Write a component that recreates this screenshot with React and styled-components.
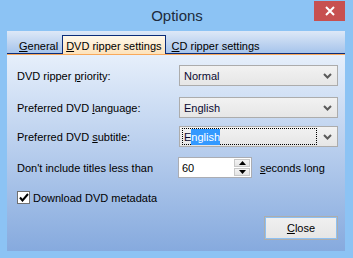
import React from 'react';
import styled, { createGlobalStyle } from 'styled-components';

const Global = createGlobalStyle`
  html, body { margin: 0; padding: 0; }
  body {
    width: 353px;
    height: 258px;
    overflow: hidden;
    font-family: "Liberation Sans", Arial, sans-serif;
    font-size: 11px;
    color: #000;
  }
`;

const Window = styled.div`
  position: relative;
  width: 353px;
  height: 258px;
  box-sizing: border-box;
  background: #8cc3f4;
  display: flex;
  flex-direction: column;
  padding: 0 8px 7px 7px;
`;

const TitleBar = styled.div`
  height: 31px;
  display: flex;
  align-items: center;
  justify-content: center;
  font-size: 15px;
  color: #1d2b3c;
  margin-left: 2px;
`;

const CloseX = styled.div`
  position: absolute;
  top: 1px;
  right: 8px;
  width: 31px;
  height: 20px;
  background: #c75050;
  display: flex;
  align-items: center;
  justify-content: center;
`;

const TabStrip = styled.div`
  height: 23px;
  box-sizing: border-box;
  display: flex;
  align-items: flex-end;
  padding-left: 8px;
  background: linear-gradient(#dde8f7, #a6c4eb);
  border-bottom: 1px solid #0c2c78;
  box-shadow: 0 1px 0 #f8a85a;
  position: relative;
  z-index: 1;
`;

const Tab = styled.div`
  height: 19px;
  box-sizing: border-box;
  display: flex;
  align-items: center;
  padding: 1px 3px 0;
  margin-right: ${p => (p.$active ? '2px' : '0')};
  margin-bottom: -1px;
  border: 1px solid ${p => (p.$active ? '#0c2c78' : 'transparent')};
  border-bottom: none;
  background: ${p => (p.$active ? 'linear-gradient(#fff8ea, #fde2bb)' : 'transparent')};
  color: #000;
`;

const Panel = styled.div`
  flex: 1;
  margin-top: 1px;
  background: linear-gradient(#e6effb, #86aade);
  padding: 10px 7px 0 10px;
  display: flex;
  flex-direction: column;
`;

const Row = styled.div`
  display: flex;
  align-items: center;
  height: 21px;
  margin-bottom: ${p => p.$gap || 10}px;
`;

const Label = styled.div`
  width: 162px;
  flex-shrink: 0;
`;

const U = styled.span`
  text-decoration: underline;
  text-underline-offset: 1px;
`;

const Select = styled.div`
  width: 159px;
  height: 21px;
  box-sizing: border-box;
  border: 1px solid #acacac;
  background: linear-gradient(#f2f2f2, #e6e6e6);
  display: flex;
  align-items: center;
  padding: 0 0 0 2px;
  color: #0a0a30;
`;

const SelectText = styled.div`
  flex: 1;
  height: 17px;
  display: flex;
  align-items: center;
  box-sizing: border-box;
  border: 1px dotted ${p => (p.$focus ? '#000' : 'transparent')};
  padding-left: 1px;
`;

const Hl = styled.span`
  background: #3399ff;
  color: #fff;
  padding: 2px 0;
`;

const Chevron = styled.div`
  width: 20px;
  display: flex;
  justify-content: center;
`;

const Spin = styled.div`
  width: 74px;
  height: 21px;
  box-sizing: border-box;
  border: 1px solid #abadb3;
  background: #fff;
  display: flex;
  margin-right: 8px;
  margin-left: -1px;
`;

const SpinValue = styled.div`
  flex: 1;
  display: flex;
  align-items: center;
  padding-left: 3px;
`;

const SpinButtons = styled.div`
  width: 16px;
  display: flex;
  flex-direction: column;
  gap: 1px;
  padding: 1px 1px 1px 0;
`;

const SpinBtn = styled.div`
  flex: 1;
  border: 1px solid #c8c8c8;
  background: linear-gradient(#f4f4f4, #e4e4e4);
  display: flex;
  align-items: center;
  justify-content: center;
`;

const CheckRow = styled.div`
  display: flex;
  align-items: center;
  gap: 3px;
  margin-top: 3px;
`;

const CheckBox = styled.div`
  width: 13px;
  height: 13px;
  box-sizing: border-box;
  border: 1px solid #707070;
  background: #fff;
  display: flex;
  align-items: center;
  justify-content: center;
`;

const Footer = styled.div`
  display: flex;
  justify-content: flex-end;
  margin-top: 12px;
`;

const Button = styled.div`
  width: 74px;
  height: 24px;
  box-sizing: border-box;
  border: 1px solid #adadad;
  box-shadow: inset 0 0 0 1px #8dc0f2;
  background: linear-gradient(#f0f0f0, #e5e5e5);
  display: flex;
  align-items: center;
  justify-content: center;
`;

const Arrow = ({ down }) => (
  <svg width="7" height="4" viewBox="0 0 7 4">
    <path d={down ? 'M0 0h7L3.5 4z' : 'M3.5 0L7 4H0z'} fill="#000" />
  </svg>
);

const Chev = () => (
  <svg width="9" height="6" viewBox="0 0 9 6">
    <path d="M1 1l3.5 3.5L8 1" stroke="#5a5a5a" strokeWidth="2" fill="none" />
  </svg>
);

export default function App() {
  return (
    <>
      <Global />
      <Window>
        <TitleBar>Options</TitleBar>
        <CloseX>
          <svg width="10" height="10" viewBox="0 0 10 10">
            <path d="M1 1l8 8M9 1l-8 8" stroke="#fff" strokeWidth="2" />
          </svg>
        </CloseX>
        <TabStrip>
          <Tab><U>G</U>eneral</Tab>
          <Tab $active><U>D</U>VD ripper settings</Tab>
          <Tab><U>C</U>D ripper settings</Tab>
        </TabStrip>
        <Panel>
          <Row $gap={11}>
            <Label>DVD ripper <U>p</U>riority:</Label>
            <Select>
              <SelectText>Normal</SelectText>
              <Chevron><Chev /></Chevron>
            </Select>
          </Row>
          <Row $gap={8}>
            <Label>Preferred DVD <U>l</U>anguage:</Label>
            <Select>
              <SelectText>English</SelectText>
              <Chevron><Chev /></Chevron>
            </Select>
          </Row>
          <Row $gap={10}>
            <Label>Preferred DVD <U>s</U>ubtitle:</Label>
            <Select>
              <SelectText $focus>E<Hl>nglish</Hl></SelectText>
              <Chevron><Chev /></Chevron>
            </Select>
          </Row>
          <Row $gap={10}>
            <Label>Don't include titles less than</Label>
            <Spin>
              <SpinValue>60</SpinValue>
              <SpinButtons>
                <SpinBtn><Arrow /></SpinBtn>
                <SpinBtn><Arrow down /></SpinBtn>
              </SpinButtons>
            </Spin>
            <div><U>s</U>econds long</div>
          </Row>
          <CheckRow>
            <CheckBox>
              <svg width="10" height="9" viewBox="0 0 10 9">
                <path d="M1 4.5l2.5 3L9 1" stroke="#000" strokeWidth="2" fill="none" />
              </svg>
            </CheckBox>
            Download DVD metadata
          </CheckRow>
          <Footer>
            <Button><U>C</U>lose</Button>
          </Footer>
        </Panel>
      </Window>
    </>
  );
}
